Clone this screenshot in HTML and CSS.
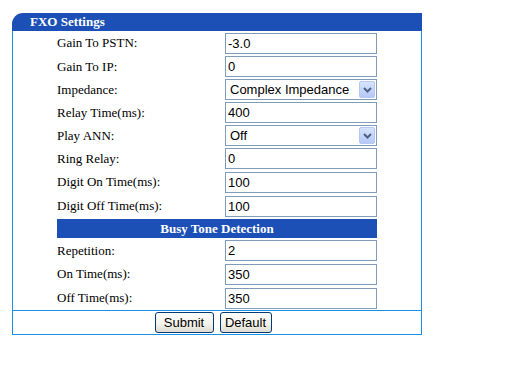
FILE: index.html
```html
<!DOCTYPE html>
<html lang="en">
<head>
    <meta charset="UTF-8">
    <title>FXO Settings</title>
    <link rel="stylesheet" href="styles.css">
</head>
<body>
    <div class="panel">
        <div class="panel-title">FXO Settings</div>
        <div class="form">
            <div class="row tall">
                <label>Gain To PSTN:</label>
                <input type="text" value="-3.0">
            </div>
            <div class="row">
                <label>Gain To IP:</label>
                <input type="text" value="0">
            </div>
            <div class="row">
                <label>Impedance:</label>
                <div class="select">
                    <select>
                        <option>Complex Impedance</option>
                        <option>600 Ohm</option>
                        <option>900 Ohm</option>
                    </select>
                    <span class="arrow"><svg width="9" height="6" viewBox="0 0 9 6"><path d="M1 1 L4.5 4.5 L8 1" fill="none" stroke="#4d6185" stroke-width="2"/></svg></span>
                </div>
            </div>
            <div class="row">
                <label>Relay Time(ms):</label>
                <input type="text" value="400">
            </div>
            <div class="row">
                <label>Play ANN:</label>
                <div class="select">
                    <select>
                        <option>Off</option>
                        <option>On</option>
                    </select>
                    <span class="arrow"><svg width="9" height="6" viewBox="0 0 9 6"><path d="M1 1 L4.5 4.5 L8 1" fill="none" stroke="#4d6185" stroke-width="2"/></svg></span>
                </div>
            </div>
            <div class="row">
                <label>Ring Relay:</label>
                <input type="text" value="0">
            </div>
            <div class="row tall">
                <label>Digit On Time(ms):</label>
                <input type="text" value="100">
            </div>
            <div class="row tall">
                <label>Digit Off Time(ms):</label>
                <input type="text" value="100">
            </div>
            <div class="section">
                <div class="section-title">Busy Tone Detection</div>
            </div>
            <div class="row">
                <label>Repetition:</label>
                <input type="text" value="2">
            </div>
            <div class="row tall">
                <label>On Time(ms):</label>
                <input type="text" value="350">
            </div>
            <div class="row tall">
                <label>Off Time(ms):</label>
                <input type="text" value="350">
            </div>
        </div>
        <div class="actions">
            <button type="button" class="btn-submit">Submit</button>
            <button type="button" class="btn-default">Default</button>
        </div>
    </div>
</body>
</html>
```

FILE: styles.css
```css
:root {
    --title: #1d50b6;
    --frame: #1a8fe6;
    --field: #7f9db9;
}

* {
    margin: 0;
    padding: 0;
    box-sizing: border-box;
}

body {
    background: #ffffff;
    font-family: 'Liberation Serif', 'Times New Roman', serif;
    font-size: 13px;
    color: #000;
}

.panel {
    margin: 13px 0 0 12px;
    width: 410px;
}

.panel-title {
    height: 18px;
    line-height: 18px;
    background: var(--title);
    color: #fff;
    font-weight: bold;
    font-size: 13px;
    padding-left: 18px;
    border-top-left-radius: 11px;
}

.form {
    border-left: 1px solid var(--frame);
    border-right: 1px solid var(--frame);
}

.row {
    display: grid;
    grid-template-columns: 44px 168px 152px;
    align-items: center;
    height: 23px;
}

.row.tall {
    height: 24px;
}

.row label {
    grid-column: 2;
}

.row input,
.select {
    grid-column: 3;
    width: 152px;
    height: 21px;
}

.row input {
    border: 1px solid var(--field);
    padding: 0 2px;
    font-family: 'Liberation Sans', Arial, sans-serif;
    font-size: 13px;
    color: #000;
    outline: none;
}

.select {
    position: relative;
}

.select select {
    appearance: none;
    -webkit-appearance: none;
    width: 100%;
    height: 100%;
    border: 1px solid var(--field);
    border-radius: 0;
    background: #fff;
    padding: 0 4px;
    font-family: 'Liberation Sans', Arial, sans-serif;
    font-size: 13px;
    color: #000;
    outline: none;
}

.select .arrow {
    position: absolute;
    top: 2px;
    right: 2px;
    width: 16px;
    height: 17px;
    background: linear-gradient(#d6e3fd, #b5c9f6);
    border: 1px solid #b4c8f4;
    border-radius: 2px;
    display: flex;
    align-items: center;
    justify-content: center;
    pointer-events: none;
}

.section {
    display: grid;
    grid-template-columns: 44px 320px;
    height: 21px;
    align-items: center;
}

.section-title {
    grid-column: 2;
    height: 19px;
    line-height: 19px;
    background: var(--title);
    color: #fff;
    font-weight: bold;
    text-align: center;
}

.actions {
    border: 1px solid var(--frame);
    height: 25px;
    display: flex;
    justify-content: center;
    align-items: center;
    gap: 6px;
    padding-right: 8px;
}

button {
    height: 21px;
    padding: 0;
    font-family: 'Liberation Sans', Arial, sans-serif;
    font-size: 13px;
    color: #000;
    background: linear-gradient(#ffffff, #f2f1ea 60%, #dedbcf);
    border: 1px solid #003c74;
    border-radius: 3px;
    cursor: pointer;
}

.btn-submit {
    width: 59px;
}

.btn-default {
    width: 52px;
}
```
